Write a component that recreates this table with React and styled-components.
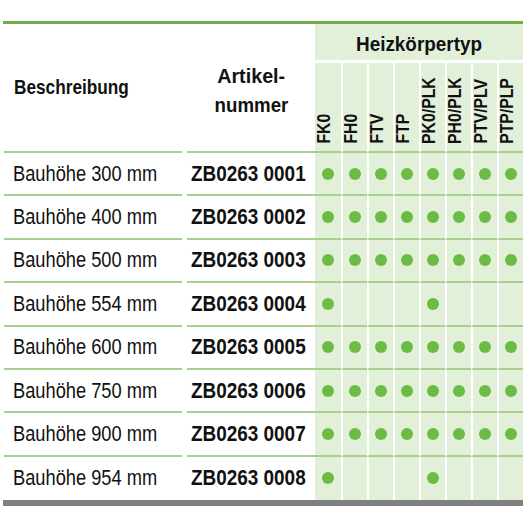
import React from "react";
import styled, { createGlobalStyle } from "styled-components";

const GlobalStyle = createGlobalStyle`
  body {
    margin: 0;
    background: #fff;
    font-family: "Liberation Sans", Arial, sans-serif;
    color: #111;
  }
`;

// the print font is a condensed sans; squeeze Liberation Sans to its width
const Squeeze = styled.span`
  display: inline-block;
  white-space: nowrap;
  transform: scaleX(${(p) => p.$sx || 0.87});
  transform-origin: ${(p) => (p.$center ? "center" : "left")} center;
`;

const Table = styled.div`
  width: 520px;
  margin: 21px 0 0 3px;
`;

const TopRule = styled.div`
  height: 3px;
  background: #70ad47;
`;

const BottomRule = styled.div`
  height: 6px;
  background: #808080;
`;

const HeadRow = styled.div`
  display: flex;
  height: 129px;
  padding-left: 1px;
`;

const HeadCell = styled.div`
  box-sizing: border-box;
  height: 100%;
  border-bottom: 2px solid #a8d08d;
  display: flex;
  align-items: center;
  font-weight: bold;
  font-size: 21px;
`;

const DescHead = styled(HeadCell)`
  width: 178px;
  margin-right: 5px;
  padding: 0 0 2px 10px;
`;

const NumHead = styled(HeadCell)`
  width: 128px;
  flex-direction: column;
  justify-content: center;
  line-height: 29px;
  padding-top: 4px;
`;

const TypeHead = styled.div`
  width: 208px;
  display: flex;
  flex-direction: column;
`;

const TypeTitle = styled.div`
  height: 40px;
  margin-bottom: 3px;
  background: #e2efd9;
  display: flex;
  align-items: center;
  justify-content: center;
  font-weight: bold;
  font-size: 21px;
  padding-top: 4px;
  box-sizing: border-box;
`;

const TypeLabels = styled.div`
  display: flex;
  flex: 1;
`;

const GreenCell = styled.div`
  box-sizing: border-box;
  width: 26px;
  height: 100%;
  background: #e2efd9;
  border-left: ${(p) => (p.$first ? "0" : "2px solid #fff")};
  border-bottom: ${(p) => (p.$last ? "0" : "2px solid #a8d08d")};
  display: flex;
  align-items: center;
  justify-content: center;
`;

const LabelCell = styled(GreenCell)`
  align-items: flex-end;
  padding: 0 9px 4px 0;
`;

const LabelSqueeze = styled.span`
  display: inline-block;
  transform: scaleY(0.83);
  transform-origin: center bottom;
`;

const Label = styled.span`
  display: inline-block;
  writing-mode: vertical-rl;
  transform: rotate(180deg);
  font-weight: bold;
  font-size: 19px;
  line-height: 19px;
  white-space: nowrap;
`;

const Row = styled.div`
  display: flex;
  height: 43.4px;
  padding-left: 1px;
`;

const BodyCell = styled.div`
  box-sizing: border-box;
  height: 100%;
  display: flex;
  align-items: center;
  font-size: 22px;
  border-bottom: ${(p) => (p.$last ? "0" : "2px solid #a8d08d")};
`;

const DescCell = styled(BodyCell)`
  width: 178px;
  margin-right: 5px;
  padding-left: 9px;
`;

const NumCell = styled(BodyCell)`
  width: 128px;
  padding-left: 4px;
  font-weight: bold;
`;

const Dot = styled.span`
  width: 12px;
  height: 12px;
  border-radius: 50%;
  background: #6cbb45;
`;

const types = ["FK0", "FH0", "FTV", "FTP", "PK0/PLK", "PH0/PLK", "PTV/PLV", "PTP/PLP"];
const all = [1, 1, 1, 1, 1, 1, 1, 1];
const some = [1, 0, 0, 0, 1, 0, 0, 0];

const rows = [
  { h: 300, nr: "0001", fit: all },
  { h: 400, nr: "0002", fit: all },
  { h: 500, nr: "0003", fit: all },
  { h: 554, nr: "0004", fit: some },
  { h: 600, nr: "0005", fit: all },
  { h: 750, nr: "0006", fit: all },
  { h: 900, nr: "0007", fit: all },
  { h: 954, nr: "0008", fit: some },
];

export default function App() {
  return (
    <>
      <GlobalStyle />
      <Table>
        <TopRule />
        <HeadRow>
          <DescHead>
            <Squeeze $sx={0.82}>Beschreibung</Squeeze>
          </DescHead>
          <NumHead>
            <Squeeze $center $sx={0.94}>Artikel-</Squeeze>
            <Squeeze $center $sx={0.89}>nummer</Squeeze>
          </NumHead>
          <TypeHead>
            <TypeTitle>
              <Squeeze $center $sx={0.9}>Heizkörpertyp</Squeeze>
            </TypeTitle>
            <TypeLabels>
              {types.map((t, i) => (
                <LabelCell key={t} $first={i === 0}>
                  <LabelSqueeze>
                    <Label>{t}</Label>
                  </LabelSqueeze>
                </LabelCell>
              ))}
            </TypeLabels>
          </TypeHead>
        </HeadRow>
        {rows.map((r, ri) => {
          const last = ri === rows.length - 1;
          return (
            <Row key={r.nr}>
              <DescCell $last={last}>
                <Squeeze $sx={0.83}>Bauhöhe {r.h} mm</Squeeze>
              </DescCell>
              <NumCell $last={last}>
                <Squeeze $sx={0.86}>ZB0263 {r.nr}</Squeeze>
              </NumCell>
              {r.fit.map((f, i) => (
                <GreenCell key={i} $first={i === 0} $last={last}>
                  {f ? <Dot /> : null}
                </GreenCell>
              ))}
            </Row>
          );
        })}
        <BottomRule />
      </Table>
    </>
  );
}
